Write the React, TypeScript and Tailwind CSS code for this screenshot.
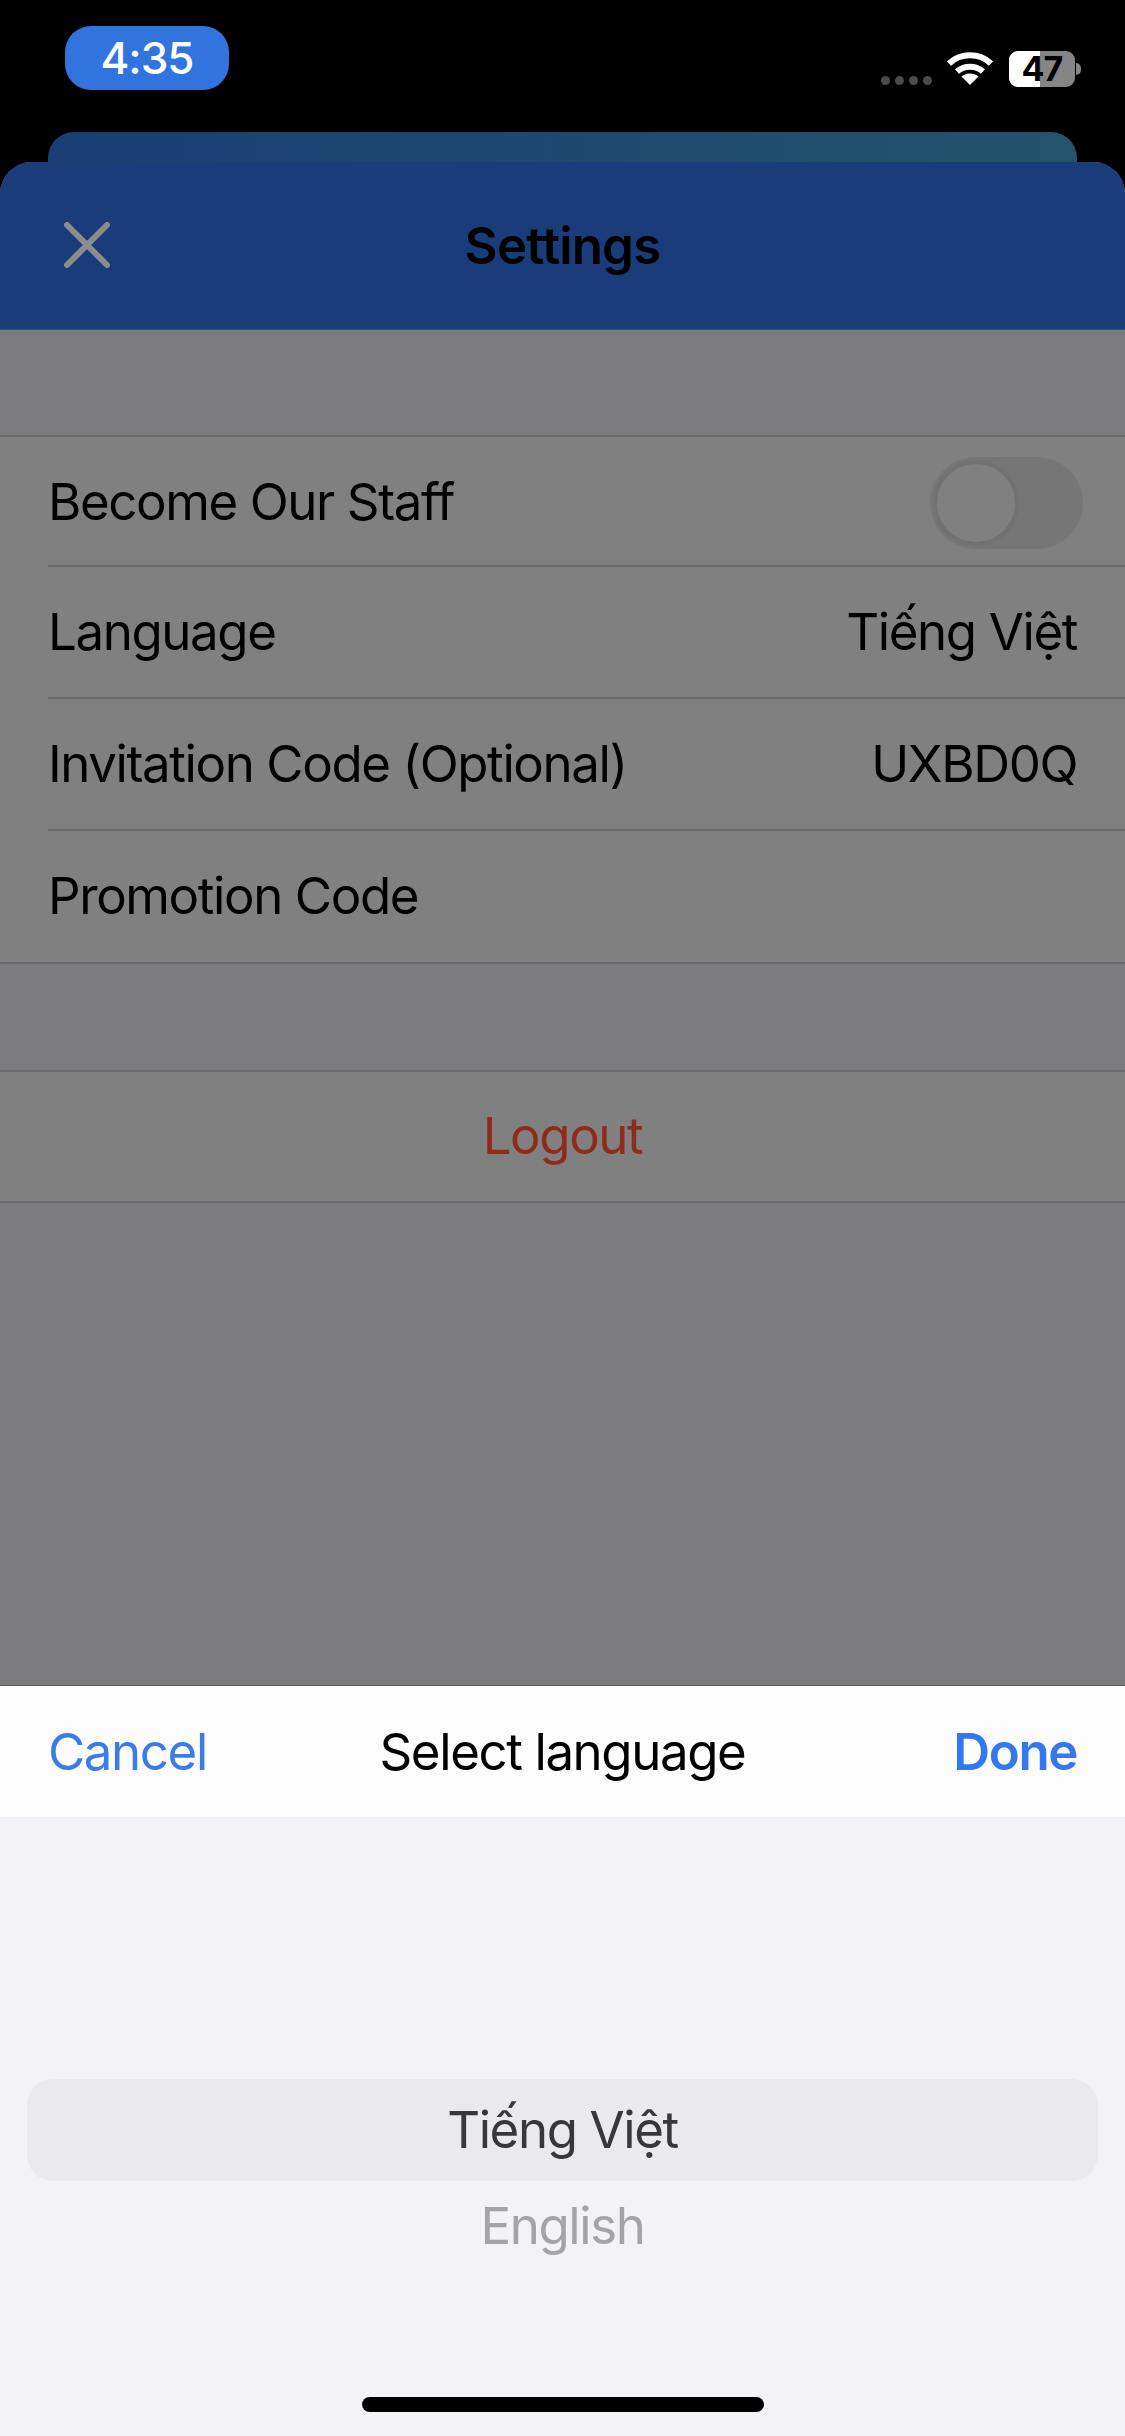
import React from 'react';

const rows = [
  { label: 'Language', value: 'Tiếng Việt', height: 'h-[132px]' },
  { label: 'Invitation Code (Optional)', value: 'UXBD0Q', height: 'h-[132px]' },
  { label: 'Promotion Code', value: '', height: 'h-[131px]' },
];

function WifiIcon() {
  return (
    <svg width="46" height="34" viewBox="0 0 46 34" fill="none">
      <path d="M2 12.500C13.500 1.500 32.500 1.500 44 12.500" stroke="white" strokeWidth="6" />
      <path d="M10 20.500C17 14 29 14 36 20.500" stroke="white" strokeWidth="6" />
      <path d="M14.500 25.500L23 34L31.500 25.500C26.500 21.500 19.500 21.500 14.500 25.500Z" fill="white" />
    </svg>
  );
}

function CloseIcon() {
  return (
    <svg width="46" height="46" viewBox="0 0 46 46" fill="none">
      <path d="M3 3L43 43M43 3L3 43" stroke="#8b8c8c" strokeWidth="6" strokeLinecap="round" />
    </svg>
  );
}

function StatusBar() {
  return (
    <div className="flex h-[132px] justify-between bg-black pl-[65px] pr-[44px]">
      <div className="mt-[26px] flex h-[64px] w-[164px] items-center justify-center rounded-[26px] bg-[#3274de] text-[44px] font-medium tracking-[-1px] text-white">
        4:35
      </div>
      <div className="mt-[51px] flex h-[36px] items-start">
        <div className="mt-[25px] mr-[15px] flex gap-[5px]">
          <span className="h-[9px] w-[9px] rounded-full bg-[#4b4b4b]" />
          <span className="h-[9px] w-[9px] rounded-full bg-[#4b4b4b]" />
          <span className="h-[9px] w-[9px] rounded-full bg-[#4b4b4b]" />
          <span className="h-[9px] w-[9px] rounded-full bg-[#4b4b4b]" />
        </div>
        <WifiIcon />
        <div className="relative ml-[16px] flex h-[36px] w-[66px] items-center justify-center rounded-[9px] bg-[#858585] text-[34px] font-bold text-black">
          <div className="absolute inset-y-0 left-0 w-[31px] rounded-l-[9px] bg-white" />
          <span className="relative leading-none tracking-[-1px]">47</span>
        </div>
        <div className="mt-[12px] ml-[1px] h-[12px] w-[5px] rounded-r-full bg-[#858585]" />
      </div>
    </div>
  );
}

export default function App() {
  return (
    <div className="flex h-[2436px] w-[1125px] flex-col overflow-hidden bg-black font-['Inter','Liberation_Sans',sans-serif] text-[51px] tracking-[-1.4px] text-black">
      <StatusBar />
      <div className="mx-[48px] h-[30px] rounded-t-[26px] bg-gradient-to-r from-[#1a3d73] to-[#23546b]" />

      <div className="flex h-[1523px] flex-col overflow-hidden rounded-t-[32px] bg-[#7b7b7d]">
        <div className="relative flex h-[168px] shrink-0 items-center justify-center border-b border-[#3a4f74] bg-[#1a3c7b] pt-[2px]">
          <div className="absolute left-[64px] top-[60px]">
            <CloseIcon />
          </div>
          <span className="font-semibold tracking-[-0.8px]">Settings</span>
        </div>

        <div className="h-[107px] shrink-0 border-b-2 border-[#6b6b6c]" />

        <div className="shrink-0 border-b-2 border-[#6b6b6c] bg-[#808080] pl-[48px]">
          <div className="flex h-[130px] items-center justify-between border-b-2 border-[#6b6b6c] pr-[42px] pt-[3px]">
            <span>Become Our Staff</span>
            <div className="relative h-[92px] w-[153px] rounded-full bg-[#767676]">
              <div className="absolute left-[3px] top-[3px] h-[86px] w-[86px] rounded-full border-[4px] border-[#727272] bg-[#808080]" />
            </div>
          </div>
          {rows.map((row, index) => (
            <div
              key={row.label}
              className={`flex items-center justify-between pr-[48px] ${row.height} ${index < rows.length - 1 ? 'border-b-2 border-[#6b6b6c]' : ''}`}
            >
              <span>{row.label}</span>
              <span>{row.value}</span>
            </div>
          ))}
        </div>

        <div className="h-[108px] shrink-0 border-b-2 border-[#6b6b6c]" />

        <div className="flex h-[131px] shrink-0 items-center justify-center border-b-2 border-[#6b6b6c] bg-[#808080] text-[#8e2c1c]">
          Logout
        </div>

        <div className="flex-1" />
      </div>

      <div className="flex h-[751px] shrink-0 flex-col border-t border-[#59595b] bg-[#f2f2f7]">
        <div className="grid h-[131px] shrink-0 grid-cols-[1fr_auto_1fr] items-center bg-[#fcfcfd] px-[48px] pt-[1px]">
          <span className="text-[#3b7bea]">Cancel</span>
          <span className="text-black">Select language</span>
          <span className="text-right font-semibold text-[#3478f0]">Done</span>
        </div>

        <div className="mt-[262px] flex flex-col px-[27px] text-center">
          <div className="flex h-[102px] items-center justify-center rounded-[26px] bg-[#e9e9ee] text-[#38383a]">
            Tiếng Việt
          </div>
          <div className="mt-[15px] leading-[60px] text-[#a3a3a8]">English</div>
        </div>

        <div className="mt-auto mb-[24px] h-[15px] w-[402px] self-center rounded-full bg-black" />
      </div>
    </div>
  );
}
